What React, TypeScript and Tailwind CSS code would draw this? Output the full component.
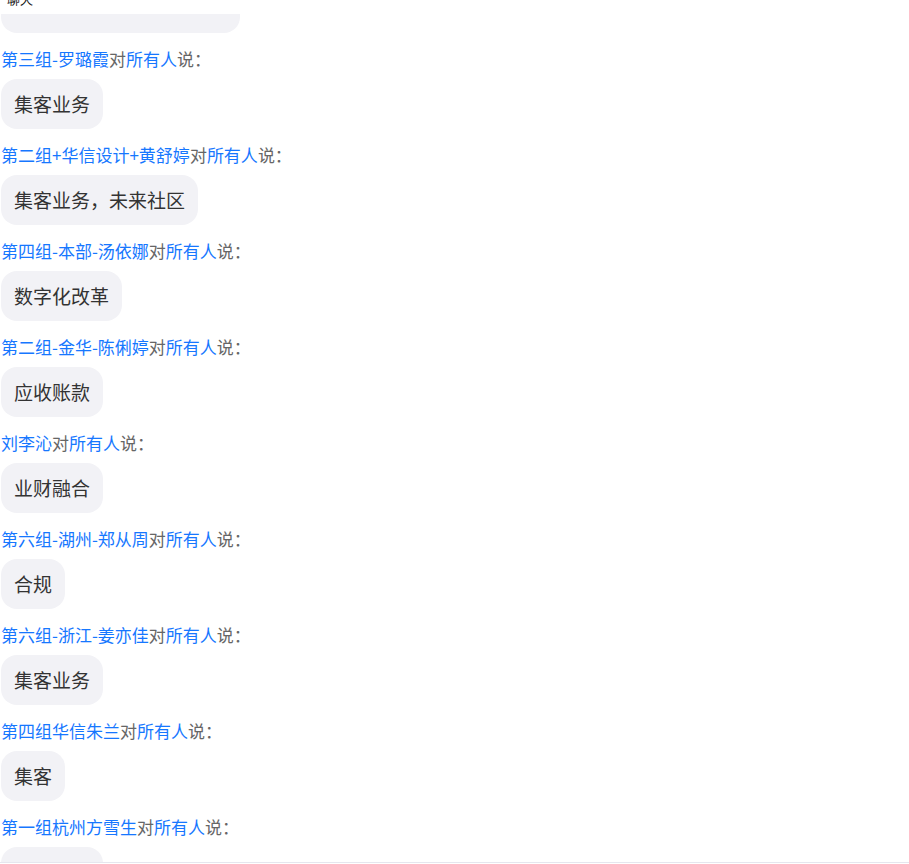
import React from "react";

const items: { name: string; msg: string }[] = [
  { name: "第三组-罗璐霞", msg: "集客业务" },
  { name: "第二组+华信设计+黄舒婷", msg: "集客业务，未来社区" },
  { name: "第四组-本部-汤依娜", msg: "数字化改革" },
  { name: "第二组-金华-陈俐婷", msg: "应收账款" },
  { name: "刘李沁", msg: "业财融合" },
  { name: "第六组-湖州-郑从周", msg: "合规" },
  { name: "第六组-浙江-姜亦佳", msg: "集客业务" },
  { name: "第四组华信朱兰", msg: "集客" },
  { name: "第一组杭州方雪生", msg: "集客业务" },
];

export default function App() {
  return (
    <div
      className="h-[864px] w-full overflow-hidden bg-white flex flex-col"
      style={{ fontFamily: '"Noto Sans CJK SC", "Noto Sans", sans-serif' }}
    >
      <div className="h-[14px] shrink-0 overflow-hidden bg-white pl-[7px]">
        <div className="-mt-[10px] text-[13px] leading-[18px] text-[#111]">聊天</div>
      </div>
      <div className="h-[848px] shrink-0 overflow-hidden pl-[1px]">
        <div className="h-[19px] w-[239px] rounded-b-[16px] bg-[#f2f2f6]" />
        {items.map((it, i) => (
          <div key={i} className="mt-[14px] flex flex-col items-start">
            <div className="text-[17px] leading-[24px] whitespace-nowrap">
              <span className="text-[#1677ff]">{it.name}</span>
              <span className="text-[#666]">对</span>
              <span className="text-[#1677ff]">所有人</span>
              <span className="text-[#666]">说：</span>
            </div>
            <div className="mt-[8px] rounded-[16px] bg-[#f2f2f6] px-[13px] py-[12px] text-[19px] leading-[26px] text-[#333] whitespace-nowrap">
              {it.msg}
            </div>
          </div>
        ))}
      </div>
      <div className="h-[2px] shrink-0 border-t border-[#e6e6ee] bg-white" />
    </div>
  );
}
